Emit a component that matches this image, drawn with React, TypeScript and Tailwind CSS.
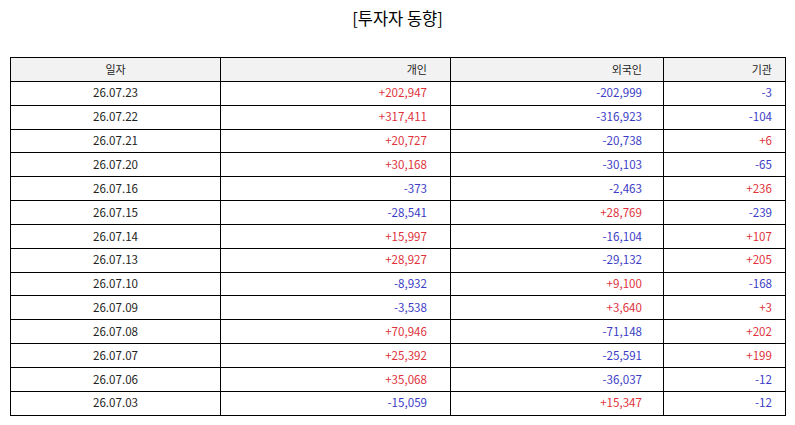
const rows: [string, string, string, string][] = [
  ["26.07.23", "+202,947", "-202,999", "-3"],
  ["26.07.22", "+317,411", "-316,923", "-104"],
  ["26.07.21", "+20,727", "-20,738", "+6"],
  ["26.07.20", "+30,168", "-30,103", "-65"],
  ["26.07.16", "-373", "-2,463", "+236"],
  ["26.07.15", "-28,541", "+28,769", "-239"],
  ["26.07.14", "+15,997", "-16,104", "+107"],
  ["26.07.13", "+28,927", "-29,132", "+205"],
  ["26.07.10", "-8,932", "+9,100", "-168"],
  ["26.07.09", "-3,538", "+3,640", "+3"],
  ["26.07.08", "+70,946", "-71,148", "+202"],
  ["26.07.07", "+25,392", "-25,591", "+199"],
  ["26.07.06", "+35,068", "-36,037", "-12"],
  ["26.07.03", "-15,059", "+15,347", "-12"],
];

function tone(v: string) {
  return v.startsWith("+") ? "text-[#e0313b]" : "text-[#3b3bc6]";
}

export default function App() {
  return (
    <div className="w-[795px] h-[425px] bg-white font-['Noto_Sans_CJK_KR','Noto_Sans',sans-serif] text-[#222]">
      <h1 className="pt-[7px] h-[57px] text-center text-[16.5px] leading-[22px] text-black">[투자자 동향]</h1>
      <table className="ml-[10px] w-[775px] table-fixed border-collapse text-[11.6px] leading-none">
        <colgroup>
          <col className="w-[210px]" />
          <col className="w-[230px]" />
          <col className="w-[213px]" />
          <col className="w-[122px]" />
        </colgroup>
        <thead>
          <tr className="h-[23.85px] bg-[#f2f2f2]">
            <th className="border-[1.5px] border-black font-normal text-[11px] text-center">일자</th>
            <th className="border-[1.5px] border-black font-normal text-[11px] text-right pr-[23px]">개인</th>
            <th className="border-[1.5px] border-black font-normal text-[11px] text-right pr-[21px]">외국인</th>
            <th className="border-[1.5px] border-black font-normal text-[11px] text-right pr-[13px]">기관</th>
          </tr>
        </thead>
        <tbody>
          {rows.map(([d, a, b, c]) => (
            <tr key={d} className="h-[23.85px]">
              <td className="border-[1.5px] border-black text-center">{d}</td>
              <td className={`border-[1.5px] border-black text-right pr-[23px] ${tone(a)}`}>{a}</td>
              <td className={`border-[1.5px] border-black text-right pr-[21px] ${tone(b)}`}>{b}</td>
              <td className={`border-[1.5px] border-black text-right pr-[13px] ${tone(c)}`}>{c}</td>
            </tr>
          ))}
        </tbody>
      </table>
    </div>
  );
}
